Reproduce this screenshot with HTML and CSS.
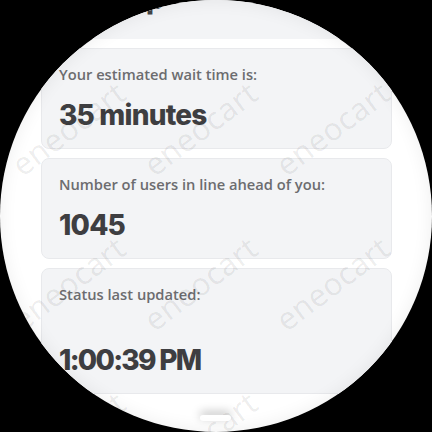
FILE: index.html
```html
<!DOCTYPE html>
<html lang="en">
<head>
<meta charset="utf-8">
<title>Queue status</title>
<link rel="stylesheet" href="styles.css">
</head>
<body>
<div class="screen">
  <header class="head">
    <h1 class="title">Hold up</h1>
  </header>
  <main class="cards">
    <section class="card">
      <p class="label">Your estimated wait time is:</p>
      <p class="value">35 minutes</p>
    </section>
    <section class="card">
      <p class="label">Number of users in line ahead of you:</p>
      <p class="value">1045</p>
    </section>
    <section class="card">
      <p class="label">Status last updated:</p>
      <p class="value value-late">1:00:39 PM</p>
    </section>
  </main>
  <div class="watermark" aria-hidden="true">
    <span class="mark">eneocart</span>
    <span class="mark">eneocart</span>
    <span class="mark">eneocart</span>
    <span class="mark">eneocart</span>
    <span class="mark">eneocart</span>
    <span class="mark">eneocart</span>
    <span class="mark">eneocart</span>
    <span class="mark">eneocart</span>
    <span class="mark">eneocart</span>
  </div>
  <div class="pill"></div>
  <div class="rim"></div>
</div>
</body>
</html>
```

FILE: styles.css
```css
html, body {
  margin: 0;
  padding: 0;
  background: #000;
}

.screen {
  position: relative;
  width: 432px;
  height: 432px;
  border-radius: 50%;
  overflow: hidden;
  background: #fff;
}

.head {
  background: #f3f4f6;
  padding-bottom: 23px;
}

.title {
  margin: -18px 0 0 58px;
  font-family: Inter, "Liberation Sans", sans-serif;
  font-weight: 800;
  font-size: 28px;
  line-height: 34px;
  color: #444446;
}

.cards {
  display: flex;
  flex-direction: column;
  gap: 9px;
  padding: 9px 40px 0 41px;
}

.card {
  background: #f3f4f6;
  border: 1px solid #e8e9ec;
  border-radius: 8px;
  padding: 15px 17px 16px;
}

.label {
  margin: 0;
  font-family: "Open Sans", "Liberation Sans", sans-serif;
  font-weight: 600;
  font-size: 14.7px;
  line-height: 20px;
  color: #6c6c6f;
}

.value {
  margin: 14px 0 0;
  font-family: Inter, "Liberation Sans", sans-serif;
  font-weight: 800;
  font-size: 28px;
  line-height: 34px;
  letter-spacing: -0.8px;
  color: #3e3e41;
}

.value-late {
  margin-top: 39px;
  letter-spacing: -1.7px;
}

.watermark {
  position: absolute;
  left: 2px;
  top: 50px;
  display: grid;
  grid-template-columns: repeat(3, 132px);
  grid-template-rows: repeat(3, 155px);
  pointer-events: none;
}

.mark {
  align-self: center;
  justify-self: center;
  transform: rotate(-37deg);
  font-family: "Open Sans", "Liberation Sans", sans-serif;
  font-weight: 400;
  font-size: 31px;
  line-height: 34px;
  letter-spacing: 0.5px;
  color: rgba(0, 0, 0, 0.085);
  white-space: nowrap;
}

.pill {
  position: absolute;
  left: 200px;
  top: 415px;
  width: 31px;
  height: 6px;
  border-radius: 3px;
  background: #fff;
  box-shadow: 0 -3px 10px rgba(0, 0, 0, 0.28);
}

.rim {
  position: absolute;
  inset: 0;
  border-radius: 50%;
  box-shadow: inset 0 0 18px rgba(0, 0, 0, 0.07);
  pointer-events: none;
}
```
